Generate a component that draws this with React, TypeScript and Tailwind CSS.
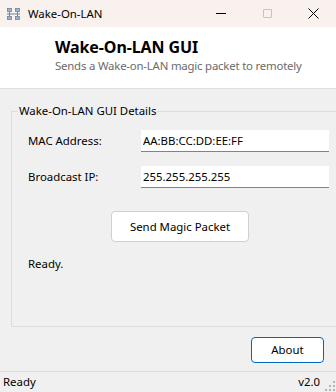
import React, { useState } from "react";

const FONT = { fontFamily: '"Noto Sans", "Open Sans", sans-serif' };

function AppIcon() {
  return (
    <svg width="13" height="12" viewBox="0 0 13 12" className="shrink-0">
      <rect x="0.5" y="0.5" width="4" height="3" fill="#9fb4c8" stroke="#6b86a3" strokeWidth="0.8" />
      <rect x="8.5" y="0.5" width="4" height="3" fill="#9fb4c8" stroke="#6b86a3" strokeWidth="0.8" />
      <rect x="0.5" y="8.5" width="4" height="3" fill="#9fb4c8" stroke="#6b86a3" strokeWidth="0.8" />
      <rect x="8.5" y="8.5" width="4" height="3" fill="#9fb4c8" stroke="#6b86a3" strokeWidth="0.8" />
      <path d="M0 6h13M2.5 4v2M10.5 4v2M2.5 6v2.5M10.5 6v2.5" stroke="#6b86a3" strokeWidth="1" />
    </svg>
  );
}

function SizeGrip() {
  const dots = [
    [10, 2],
    [6, 6],
    [10, 6],
    [2, 10],
    [6, 10],
    [10, 10],
  ];
  return (
    <svg width="13" height="13" viewBox="0 0 13 13" className="absolute right-0 bottom-0">
      {dots.map(([x, y], i) => (
        <rect key={i} x={x} y={y} width="2" height="2" fill="#b5b5b5" />
      ))}
    </svg>
  );
}

export default function App() {
  const [mac, setMac] = useState("AA:BB:CC:DD:EE:FF");
  const [ip, setIp] = useState("255.255.255.255");
  const [status, setStatus] = useState("Ready.");

  return (
    <div
      className="w-[336px] h-[392px] flex flex-col bg-[#f0f0f0] text-[11.4px] text-black overflow-hidden select-none"
      style={FONT}
    >
      {/* Title bar */}
      <div className="h-[27px] shrink-0 bg-[#f9f1ee] flex items-center pl-[7px]">
        <AppIcon />
        <span className="ml-[8px] leading-none">Wake-On-LAN</span>
        <div className="ml-auto flex items-center h-full">
          <div className="w-[46px] h-full flex items-center justify-center">
            <div className="w-[10px] h-px bg-black" />
          </div>
          <div className="w-[46px] h-full flex items-center justify-center">
            <div className="w-[9px] h-[9px] border border-[#c4c4c4] rounded-[1px]" />
          </div>
          <div className="w-[46px] h-full flex items-center justify-center">
            <svg width="11" height="11" viewBox="0 0 11 11">
              <path d="M0.5 0.5L10.5 10.5M10.5 0.5L0.5 10.5" stroke="#000" strokeWidth="1" />
            </svg>
          </div>
        </div>
      </div>

      {/* Header */}
      <div className="h-[62px] shrink-0 bg-white border-b border-[#dfdfdf] pl-[55px] pt-[10px]">
        <div className="text-[16px] font-bold leading-[20px] tracking-[-0.1px]">Wake-On-LAN GUI</div>
        <div className="leading-[18px] text-[#6b6b6b] whitespace-nowrap tracking-[-0.2px]">
          Sends a Wake-on-LAN magic packet to remotely
        </div>
      </div>

      {/* Body */}
      <div className="flex-1 flex flex-col pt-[14px]">
        <fieldset className="ml-[11px] w-[338px] h-[224px] shrink-0 border border-[#dcdcdc]">
          <legend className="ml-[6px] px-px leading-[16px]">Wake-On-LAN GUI Details</legend>
          <div className="pl-[16px] pt-[11px]">
            <div className="flex items-center h-[22px]">
              <span className="w-[113px]">MAC Address:</span>
              <input
                value={mac}
                onChange={(e) => setMac(e.target.value)}
                className="w-[188px] h-[22px] bg-white border-b border-[#838383] px-[2px] outline-none"
              />
            </div>
            <div className="flex items-center h-[22px] mt-[14px]">
              <span className="w-[113px]">Broadcast IP:</span>
              <input
                value={ip}
                onChange={(e) => setIp(e.target.value)}
                className="w-[188px] h-[22px] bg-white border-b border-[#838383] px-[2px] outline-none"
              />
            </div>
            <div className="flex justify-center pr-[16px] mt-[23px]">
              <button
                onClick={() => setStatus("Magic packet sent.")}
                className="w-[138px] h-[31px] bg-white border border-[#d0d0d0] rounded-[4px]"
              >
                Send Magic Packet
              </button>
            </div>
            <div className="mt-[14px] leading-[16px]">{status}</div>
          </div>
        </fieldset>

        <div className="flex justify-end pr-[12px] mt-[10px]">
          <button className="w-[73px] h-[26px] bg-white border border-[#0067c0] rounded-[4px]">
            About
          </button>
        </div>
      </div>

      {/* Status bar */}
      <div className="relative h-[21px] shrink-0 border-t border-[#dadada] flex items-center pl-[3px] pr-[16px]">
        <span>Ready</span>
        <span className="ml-auto">v2.0</span>
        <SizeGrip />
      </div>
    </div>
  );
}
